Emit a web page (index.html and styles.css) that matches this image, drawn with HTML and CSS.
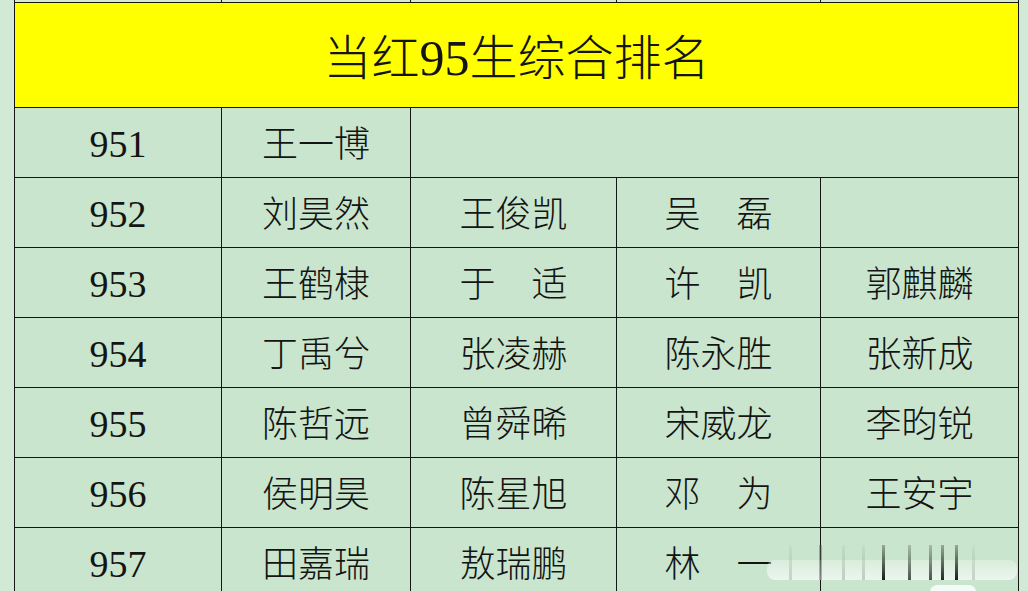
FILE: index.html
```html
<!DOCTYPE html>
<html lang="zh">
<head>
<meta charset="utf-8">
<title>当红95生综合排名</title>
<link rel="stylesheet" href="styles.css">
</head>
<body>
<div class="page">
  <div class="sheet">
    <div class="cell strip"></div><div class="cell strip"></div><div class="cell strip"></div><div class="cell strip"></div><div class="cell strip"></div>
    <div class="cell title">当红<span class="digits">95</span>生综合排名</div>

    <div class="cell num">951</div><div class="cell">王一博</div><div class="cell span3"></div>

    <div class="cell num">952</div><div class="cell">刘昊然</div><div class="cell">王俊凯</div><div class="cell">吴　磊</div><div class="cell"></div>

    <div class="cell num">953</div><div class="cell">王鹤棣</div><div class="cell">于　适</div><div class="cell">许　凯</div><div class="cell">郭麒麟</div>

    <div class="cell num">954</div><div class="cell">丁禹兮</div><div class="cell">张凌赫</div><div class="cell">陈永胜</div><div class="cell">张新成</div>

    <div class="cell num">955</div><div class="cell">陈哲远</div><div class="cell">曾舜晞</div><div class="cell">宋威龙</div><div class="cell">李昀锐</div>

    <div class="cell num">956</div><div class="cell">侯明昊</div><div class="cell">陈星旭</div><div class="cell">邓　为</div><div class="cell">王安宇</div>

    <div class="cell num">957</div><div class="cell">田嘉瑞</div><div class="cell">敖瑞鹏</div><div class="cell">林　一</div><div class="cell"></div>
  </div>
  <div class="watermark">
    <span class="bar b1"></span><span class="bar b2"></span><span class="bar b3"></span><span class="bar b4"></span><span class="bar b5"></span><span class="bar b6"></span><span class="bar b7"></span><span class="bar b8"></span><span class="bar b9"></span><span class="bar b10"></span>
  </div>
  <div class="blob"></div>
</div>
</body>
</html>
```
FILE: styles.css
```css
html, body {
  margin: 0;
  padding: 0;
  background: #d2e9d6;
  overflow: hidden;
}
.page {
  position: relative;
  width: 1028px;
  height: 591px;
  padding-left: 14px;
  box-sizing: border-box;
}
.sheet {
  width: 1005px;
  box-sizing: border-box;
  display: grid;
  grid-template-columns: 206px 188px 205px 203px 197px;
  grid-template-rows: 2px 104px repeat(7, 69px);
  gap: 1px;
  padding: 0 1px 1px 1px;
  background: #141614;
  font-family: "Liberation Serif", "Noto Sans CJK SC", serif;
  color: #141414;
}
.cell {
  background: #c9e5cd;
  display: flex;
  align-items: center;
  justify-content: center;
  font-size: 36px;
  font-weight: 300;
  line-height: 1;
  padding-top: 5px;
  overflow: hidden;
}
.strip {
  background: #d9ecc9;
  padding: 0;
}
.num {
  font-size: 38px;
  font-weight: 400;
  padding-top: 2px;
}
.title {
  grid-column: 1 / -1;
  background: #ffff00;
  font-size: 48px;
  padding-top: 8px;
}
.digits {
  display: inline-block;
  font-family: "Liberation Serif", serif;
  font-weight: 400;
  font-size: 50px;
  padding-bottom: 2px;
}
.span3 {
  grid-column: span 3;
}
.watermark {
  position: absolute;
  left: 767px;
  top: 560px;
  width: 250px;
  height: 20px;
  border-radius: 8px;
  background: linear-gradient(to bottom, rgba(255,255,255,0.3), rgba(255,255,255,0.65));
}
.bar {
  position: absolute;
  top: -15px;
  width: 3px;
  height: 35px;
  background: linear-gradient(to bottom, rgba(40,50,40,0.1), rgba(40,50,40,0.6));
}
.b1 { left: 52px; background: rgba(90,100,90,0.45); }
.b2 { left: 22px; opacity: 0.3; }
.b3 { left: 75px; opacity: 0.35; }
.b4 { left: 95px; opacity: 0.35; }
.b5 { left: 115px; background: linear-gradient(to bottom, rgba(20,30,20,0.3), rgba(10,20,10,0.95)); }
.b6 { left: 141px; background: linear-gradient(to bottom, rgba(20,30,20,0.2), rgba(20,30,20,0.75)); }
.b7 { left: 162px; background: linear-gradient(to bottom, rgba(20,30,20,0.2), rgba(20,30,20,0.75)); }
.b8 { left: 174px; background: linear-gradient(to bottom, rgba(20,30,20,0.3), rgba(10,20,10,0.9)); }
.b9 { left: 188px; background: linear-gradient(to bottom, rgba(20,30,20,0.3), rgba(10,20,10,0.95)); }
.b10 { left: 205px; opacity: 0.3; }
.blob {
  position: absolute;
  left: 930px;
  top: 585px;
  width: 46px;
  height: 14px;
  border-radius: 8px;
  background: rgba(255,255,255,0.8);
}
```
